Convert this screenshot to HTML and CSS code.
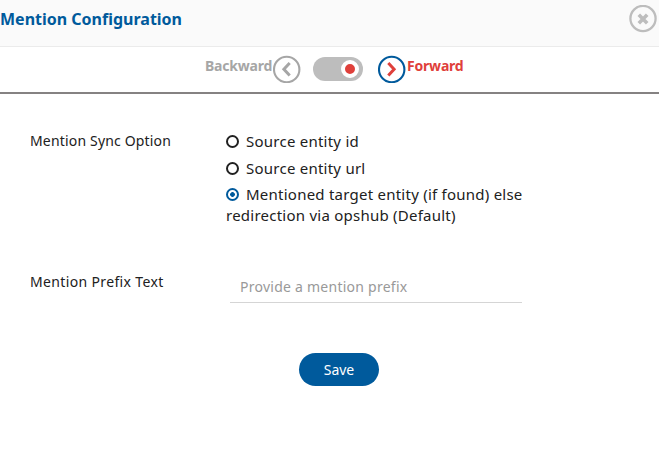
FILE: index.html
```html
<!DOCTYPE html>
<html lang="en">
<head>
<meta charset="utf-8">
<title>Mention Configuration</title>
<link rel="stylesheet" href="styles.css">
</head>
<body>
<header class="header">
  <h1 class="title">Mention Configuration</h1>
  <button class="close" type="button" aria-label="Close">
    <svg width="28" height="28" viewBox="0 0 28 28"><circle cx="14" cy="13.5" r="12.6" fill="none" stroke="#bdbdbd" stroke-width="2.3"/><path d="M9.8 9.8l8.4 8.4M18.2 9.8l-8.4 8.4" stroke="#bdbdbd" stroke-width="3.6"/></svg>
  </button>
</header>
<div class="direction">
  <span class="backward">Backward</span>
  <svg class="arrow" width="28" height="28" viewBox="0 0 28 28"><circle cx="13.7" cy="14.5" r="12.7" fill="none" stroke="#a6a6a6" stroke-width="2.1"/><path d="M16.7 8l-5.8 6.2 5.8 6.2" fill="none" stroke="#a6a6a6" stroke-width="3"/></svg>
  <span class="switch"><span class="knob"></span></span>
  <svg class="arrow" width="28" height="28" viewBox="0 0 28 28"><circle cx="13.7" cy="14.5" r="12.7" fill="none" stroke="#005a9c" stroke-width="2.1"/><path d="M10.3 8l5.8 6.2-5.8 6.2" fill="none" stroke="#df403b" stroke-width="3"/></svg>
  <span class="forward">Forward</span>
</div>
<form class="form">
  <div class="row options-row">
    <div class="label sync">Mention Sync Option</div>
    <div class="options">
      <div class="option"><i class="radio"></i>Source entity id</div>
      <div class="option"><i class="radio"></i>Source entity url</div>
      <div class="option default"><i class="radio checked"></i>Mentioned target entity (if found) else<br>redirection via opshub (Default)</div>
    </div>
  </div>
  <div class="row">
    <div class="label prefix">Mention Prefix Text</div>
    <div class="field">Provide a mention prefix</div>
  </div>
  <button class="save" type="button">Save</button>
</form>
</body>
</html>
```
FILE: styles.css
```css
* { box-sizing: border-box; }
body { margin: 0; background: #fff; color: #212121; font: 14px/21px "Noto Sans", sans-serif; }
button { border: 0; padding: 0; background: none; font: inherit; }
.header { display: flex; justify-content: space-between; width: 659px; height: 47px; padding: 5px 2px 0 0; background: #fafafa; border-bottom: 1px solid #ebebeb; }
.title { margin: 3px 0 0; font-size: 16px; line-height: 22px; font-weight: 700; color: #005a9c; }
.close { width: 28px; height: 28px; }
.close svg { display: block; }
.direction { display: flex; align-items: flex-start; width: 659px; height: 47px; padding: 8px 0 0 205px; border-bottom: 2px solid #858282; font-size: 14px; font-weight: 700; line-height: 22px; letter-spacing: -0.2px; }
.backward { width: 68px; color: #a6a6a6; }
.forward { margin-left: 1px; color: #df403b; }
.arrow { flex: none; }
.switch { display: flex; justify-content: flex-end; width: 50px; height: 24px; margin: 2px 15px 0 12px; padding: 3px 4px 0 0; border-radius: 12px; background: #bdbdbd; }
.knob { width: 18px; height: 18px; border: 4px solid #fff; border-radius: 50%; background: #df403b; }
.form { padding: 37px 30px 0; }
.row { display: flex; }
.label { width: 196px; line-height: 19px; }
.sync { letter-spacing: 0.17px; }
.prefix { letter-spacing: 0.35px; }
.options-row { height: 141px; }
.options { font-size: 15px; letter-spacing: 0.24px; }
.option { margin-bottom: 6px; }
.default { margin-top: -1px; }
.radio { display: inline-block; width: 13px; height: 13px; margin-right: 7px; border: 2px solid #212121; border-radius: 50%; vertical-align: -1px; }
.radio.checked { border-color: #005a9c; background: radial-gradient(circle, #005a9c 2px, transparent 2.7px); }
.field { width: 292px; height: 31px; margin-left: 4px; padding: 4px 10px 0; border-bottom: 1px solid #d5d5d5; color: #999; letter-spacing: 0.25px; }
.save { display: block; width: 80px; height: 33px; margin: 50px 0 0 269px; padding-bottom: 1px; border-radius: 17px; background: #005a9c; color: #fff; }
```
